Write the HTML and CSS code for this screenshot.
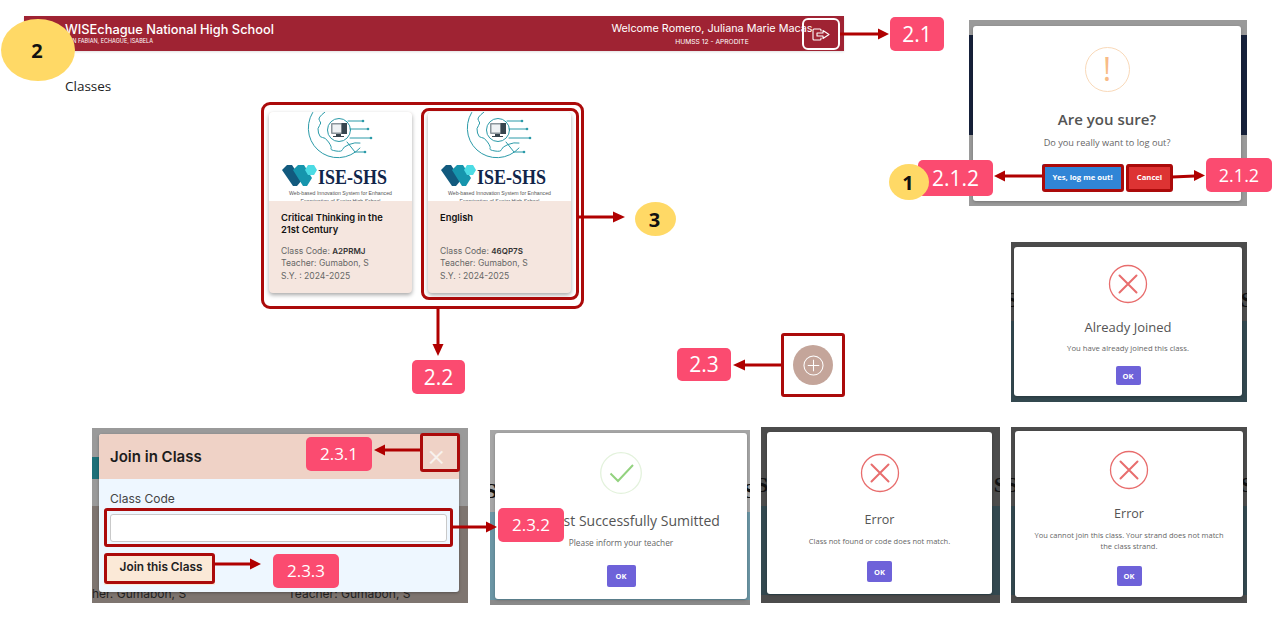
FILE: index.html
```html
<!DOCTYPE html>
<html lang="en">
<head>
<meta charset="utf-8">
<title>Classes</title>
<link rel="stylesheet" href="styles.css">
</head>
<body>
<svg class="defs" aria-hidden="true">
  <symbol id="logo" viewBox="0 0 143 89">
    <g fill="none" stroke="#2b9aa8" stroke-width="1" stroke-linecap="round" stroke-linejoin="round">
      <path d="M47 -4 A29 29 0 0 0 91 36"/>
      <path d="M56 0 Q48 6 50.500 8.500 Q53 11 50.500 13.500 Q48 16 49.500 21 Q51 26 53.500 25.500 Q56 25 59.500 30 Q63 35 62 36.500 Q61 38 67 39 Q73 40 73.500 37.500 Q74 35 80 32.500 Q86 30 91 31"/>
      <circle cx="70" cy="18" r="11.500"/>
      <path d="M79 9H94M81 17H99M81 26H102M78 30L86 40H96"/>
    </g>
    <g fill="#2b9aa8"><circle cx="94" cy="9" r="1.300"/><circle cx="99" cy="17" r="1.300"/><circle cx="102" cy="26" r="1.300"/><circle cx="96" cy="40" r="1.300"/></g>
    <rect x="62" y="11" width="16" height="11" rx="1" fill="#8a959b"/>
    <rect x="63.500" y="12.500" width="9" height="8" fill="#eef2f4"/>
    <rect x="72.500" y="11" width="5.500" height="11" fill="#37464f"/>
    <path d="M67 22h5v2h3v1H64v-1h3z" fill="#37464f"/>
    <path d="M13 58 L18 53 H23 L33 68 L28 74 H24 Z" fill="#125a7e"/>
    <path d="M24 58 L29 53 H35 L43 66 L38 74 H34 Z" fill="#1695ad"/>
    <path d="M36 58 L39 53 H45 L48 58 L45 63 H39 Z" fill="#4cdbe4"/>
    <text class="logo-word" x="49" y="72" textLength="69" lengthAdjust="spacingAndGlyphs">ISE-SHS</text>
    <text class="logo-sub" x="71.500" y="83" text-anchor="middle" textLength="103" lengthAdjust="spacingAndGlyphs">Web-based Innovation System for Enhanced</text>
    <text class="logo-sub" x="71.500" y="91" text-anchor="middle" textLength="80" lengthAdjust="spacingAndGlyphs">Examination of Senior High School</text>
  </symbol>
  <symbol id="x-icon" viewBox="0 0 40 40">
    <circle cx="20" cy="20" r="18.500" fill="none" stroke="#e86d6d" stroke-width="1.300"/>
    <path d="M11.500 11.500L28.500 28.500M28.500 11.500L11.500 28.500" stroke="#e86d6d" stroke-width="2" stroke-linecap="round"/>
  </symbol>
</svg>

<main class="canvas">
  <header class="topbar">
    <div class="school">
      <div class="school-name">WISEchague National High School</div>
      <div class="school-place">SAN FABIAN, ECHAGUE, ISABELA</div>
    </div>
    <div class="student">
      <div class="student-name">Welcome Romero, Juliana Marie Macas</div>
      <div class="student-class">HUMSS 12 - APRODITE</div>
    </div>
    <div class="logout-box">
      <svg class="logout-icon" viewBox="0 0 18 13" fill="none" stroke="#fff" stroke-width="1.100" stroke-linecap="round" stroke-linejoin="round">
        <path d="M9 3V2A1 1 0 0 0 8 1H2A1 1 0 0 0 1 2V11A1 1 0 0 0 2 12H8A1 1 0 0 0 9 11V10"/>
        <path d="M5 5H11V2.500L17 6.500L11 10.500V8H5Z"/>
      </svg>
    </div>
  </header>
  <div class="page-title">Classes</div>

  <section class="cards">
    <article class="card">
      <div class="card-img"><svg class="logo"><use href="#logo"/></svg></div>
      <div class="card-body">
        <h3 class="card-title">Critical Thinking in the 21st Century</h3>
        <p class="card-meta">Class Code: <b>A2PRMJ</b><br>Teacher: Gumabon, S<br>S.Y. : 2024-2025</p>
      </div>
    </article>
    <article class="card">
      <div class="card-img"><svg class="logo"><use href="#logo"/></svg></div>
      <div class="card-body">
        <h3 class="card-title">English</h3>
        <p class="card-meta">Class Code: <b>46QP7S</b><br>Teacher: Gumabon, S<br>S.Y. : 2024-2025</p>
      </div>
    </article>
  </section>

  <div class="fab"><svg class="fab-icon" viewBox="0 0 22 22" fill="none" stroke="#fff" stroke-width="1.100"><circle cx="11" cy="11" r="10"/><path d="M11 5V17M5 11H17"/></svg></div>

  <div class="frame frame-logout">
    <div class="dialog dialog-logout">
      <div class="warn-icon">!</div>
      <h2 class="d-title d-title-sure">Are you sure?</h2>
      <p class="d-text d-text-sure">Do you really want to log out?</p>
      <div class="d-actions">
        <button class="btn btn-yes">Yes, log me out!</button>
        <button class="btn btn-cancel">Cancel</button>
      </div>
    </div>
  </div>

  <div class="frame frame-dark frame-joined">
    <span class="ghost ghost-l">S</span><span class="ghost ghost-r">S</span>
    <div class="dialog dialog-joined">
      <svg class="x-icon"><use href="#x-icon"/></svg>
      <h2 class="d-title d-title-joined">Already Joined</h2>
      <p class="d-text">You have already joined this class.</p>
      <button class="btn-ok ok-joined">OK</button>
    </div>
  </div>

  <div class="frame frame-join">
    <span class="join-teal"></span>
    <span class="ghost-text ghost-text-a">her. Gumabon, S</span>
    <span class="ghost-text ghost-text-b">Teacher: Gumabon, S</span>
    <div class="join-dialog">
      <div class="join-head">
        <h2 class="join-title">Join in Class</h2>
        <span class="join-x">×</span>
      </div>
      <div class="join-body">
        <label class="join-label" for="code">Class Code</label>
        <input class="join-input" id="code" type="text">
        <button class="join-btn">Join this Class</button>
      </div>
    </div>
  </div>

  <div class="frame frame-success">
    <span class="ghost ghost-l ghost-low">S</span><span class="ghost ghost-r ghost-low">S</span>
    <div class="dialog dialog-success">
      <svg class="check-icon" viewBox="0 0 42 42" fill="none"><circle cx="21" cy="21" r="20.300" stroke="#e3f2dc" stroke-width="1.300"/><path d="M10.500 21.500L18 29L33 13" stroke="#93d27f" stroke-width="2"/></svg>
      <h2 class="d-title d-title-success">Request Successfully Sumitted</h2>
      <p class="d-text d-text-success">Please inform your teacher</p>
      <button class="btn-ok ok-success">OK</button>
    </div>
  </div>

  <div class="frame frame-dark frame-err1">
    <span class="ghost ghost-l">S</span><span class="ghost ghost-r">S</span>
    <div class="dialog dialog-err1">
      <svg class="x-icon"><use href="#x-icon"/></svg>
      <h2 class="d-title d-title-error">Error</h2>
      <p class="d-text d-text-error">Class not found or code does not match.</p>
      <button class="btn-ok ok-err1">OK</button>
    </div>
  </div>

  <div class="frame frame-dark frame-err2">
    <span class="ghost ghost-l">S</span><span class="ghost ghost-r">S</span>
    <div class="dialog dialog-err2">
      <svg class="x-icon"><use href="#x-icon"/></svg>
      <h2 class="d-title d-title-error d-title-error2">Error</h2>
      <p class="d-text d-text-error d-text-wrap">You cannot join this class. Your strand does not match the class strand.</p>
      <button class="btn-ok ok-err2">OK</button>
    </div>
  </div>

  <div class="hl hl-outer"></div>
  <div class="hl hl-inner"></div>
  <div class="hl hl-fab"></div>
  <div class="hl hl-x"></div>
  <div class="hl hl-input"></div>
  <div class="hl hl-join"></div>
  <div class="hl hl-yes"></div>
  <div class="hl hl-cancel"></div>

  <svg class="arrows" viewBox="0 0 1280 644" fill="none" stroke="#b00000" stroke-width="3">
    <path d="M840 34H878"/><path class="head" d="M878 28.500L889 34L878 39.500Z"/>
    <path d="M1042 176H1005"/><path class="head" d="M1005 170.500L994 176L1005 181.500Z"/>
    <path d="M1172 177L1195 176"/><path class="head" d="M1194 170L1205 175.500L1194 181Z"/>
    <path d="M578 217H614"/><path class="head" d="M613 211.500L625 217L613 222.500Z"/>
    <path d="M438 308V345"/><path class="head" d="M432.500 344L438 356L443.500 344Z"/>
    <path d="M781 365H745"/><path class="head" d="M745 359.500L733 365L745 370.500Z"/>
    <path d="M420 450H385"/><path class="head" d="M385 444.500L374 450L385 455.500Z"/>
    <path d="M452 527H487"/><path class="head" d="M486 521.500L497 527L486 532.500Z"/>
    <path d="M215 564H250"/><path class="head" d="M250 558.500L261 564L250 569.500Z"/>
  </svg>

  <div class="tag tag-21">2.1</div>
  <div class="tag tag-212a">2.1.2</div>
  <div class="tag tag-212b">2.1.2</div>
  <div class="tag tag-22">2.2</div>
  <div class="tag tag-23">2.3</div>
  <div class="tag tag-231">2.3.1</div>
  <div class="tag tag-232">2.3.2</div>
  <div class="tag tag-233">2.3.3</div>

  <div class="step step-2">2</div>
  <div class="step step-1">1</div>
  <div class="step step-3">3</div>
</main>
</body>
</html>
```

FILE: styles.css
```css
* { box-sizing: border-box; }
html, body { margin: 0; padding: 0; background: #fff; }
body { font-family: "Open Sans", "Liberation Sans", sans-serif; }
h2, h3, p { margin: 0; }
button { font: inherit; border: 0; padding: 0; }
.defs { position: absolute; width: 0; height: 0; }

.canvas { position: relative; width: 1280px; height: 644px; overflow: hidden; background: #fff; }

/* top bar */
.topbar {
  position: absolute; left: 24px; top: 16px; width: 820px; height: 35px;
  background: #9f2333; color: #fff; display: flex; align-items: center;
  font-family: Inter, "Open Sans", sans-serif; box-shadow: 0 1px 2px rgba(0,0,0,.12);
}
.school { margin-left: 41px; flex: 1; }
.school-name { font-size: 12.800px; font-weight: 500; line-height: 15px; }
.school-place { font-size: 5.500px; line-height: 7px; margin-top: 1px; }
.student { text-align: center; width: 202px; margin-right: 31px; }
.student-name { font-size: 10.800px; line-height: 14px; white-space: nowrap; }
.student-class { font-size: 6.700px; line-height: 8px; margin-top: 2px; }
.logout-box {
  position: absolute; left: 778px; top: 2px; width: 38px; height: 32px;
  border: 2px solid #fff; border-radius: 6px; display: flex; align-items: center; justify-content: center;
}
.logout-icon { width: 18px; height: 13px; }

.page-title { position: absolute; left: 65px; top: 77px; font-size: 13.500px; line-height: 18px; color: #222; }

/* cards */
.cards { position: absolute; left: 269px; top: 112px; display: flex; gap: 16px; font-family: Inter, "Open Sans", sans-serif; }
.card { width: 143px; height: 181px; border-radius: 4px; overflow: hidden; background: #f5e6df; box-shadow: 0 2px 4px rgba(0,0,0,.35); }
.card-img { height: 89px; background: #fff; overflow: hidden; }
.logo { display: block; width: 143px; height: 89px; }
.logo-word { font-family: "Liberation Serif", serif; font-size: 21px; font-weight: 700; fill: #10254a; }
.logo-sub { font-family: "Liberation Sans", sans-serif; font-size: 5px; fill: #555; }
.card-body { padding: 11px 12px 0; }
.card-title { font-size: 9.400px; font-weight: 600; line-height: 11.500px; height: 23px; color: #111; }
.card-meta { margin-top: 10px; font-size: 8.600px; line-height: 12.300px; color: #666; white-space: nowrap; }
.card-meta b { color: #333; font-size: 8px; font-weight: 600; }

/* floating button */
.fab { position: absolute; left: 793px; top: 345px; width: 40px; height: 40px; border-radius: 50%; background: #c4a59a; display: flex; align-items: center; justify-content: center; }
.fab-icon { width: 21px; height: 21px; }

/* framed dialogs */
.frame { position: absolute; overflow: hidden; }
.frame-logout { left: 969px; top: 20px; width: 278px; height: 186px; background: linear-gradient(#9a9a9a 15px, #16213a 15px, #16213a 115px, #9a9a9a 115px); }
.frame-dark { background: linear-gradient(#4c4c4c 79px, #33484f 79px, #33484f 168px, #4c4c4c 168px); }
.frame-joined { left: 1011px; top: 242px; width: 236px; height: 160px; }
.frame-err1 { left: 761px; top: 427px; width: 239px; height: 176px; }
.frame-err2 { left: 1011px; top: 427px; width: 236px; height: 176px; }
.frame-success { left: 490px; top: 430px; width: 260px; height: 175px; background: linear-gradient(#a6a6a6 82px, #6b96a5 82px, #6b96a5 170px, #8a8a8a 170px); }
.frame-join { left: 92px; top: 428px; width: 376px; height: 175px; background: linear-gradient(#9a9a9a 78px, #7e7570 78px); }
.join-teal { position: absolute; left: 0; top: 29px; width: 8px; height: 22px; background: #1d7078; }

.ghost { position: absolute; top: 45px; font-family: "Liberation Serif", serif; font-weight: 700; font-size: 22px; line-height: 26px; color: #111; }
.ghost-l { left: -5px; }
.ghost-r { right: -6px; }
.ghost-low { top: 48px; }
.ghost-text { position: absolute; top: 158px; font-family: Inter, sans-serif; font-size: 12px; line-height: 16px; color: #222; white-space: nowrap; }
.ghost-text-a { left: 0; }
.ghost-text-b { left: 196px; }

.dialog { position: absolute; background: #fff; border-radius: 3px; display: flex; flex-direction: column; align-items: center; color: #545454; box-shadow: 0 1px 3px rgba(0,0,0,.25); }
.dialog-logout { left: 4px; top: 6px; width: 268px; height: 175px; padding-top: 21px; }
.dialog-joined { left: 3px; top: 5px; width: 228px; height: 149px; padding-top: 17px; }
.dialog-success { left: 5px; top: 3px; width: 252px; height: 166px; padding-top: 19px; }
.dialog-err1 { left: 6px; top: 5px; width: 225px; height: 162px; padding-top: 21px; }
.dialog-err2 { left: 4px; top: 4px; width: 228px; height: 166px; padding-top: 19px; }

.warn-icon { width: 45px; height: 45px; border: 1.500px solid #f9d9b9; border-radius: 50%; color: #f8bb86; font-size: 32px; line-height: 41px; text-align: center; font-weight: 400; }
.check-icon { width: 42px; height: 42px; display: block; }
.x-icon { width: 40px; height: 40px; display: block; }

.d-title { font-weight: 600; line-height: 20px; white-space: nowrap; }
.d-title-sure { font-size: 15px; margin-top: 17px; }
.d-title-joined { font-size: 13px; font-weight: 500; margin-top: 13px; }
.d-title-success { font-size: 14px; font-weight: 500; margin-top: 17px; }
.d-title-error { font-size: 12.500px; font-weight: 500; margin-top: 17px; }
.d-title-error2 { margin-top: 14px; }
.d-text { font-size: 7.700px; line-height: 11px; margin-top: 6px; color: #666; text-align: center; }
.d-text-sure { font-size: 9.200px; line-height: 14px; margin-top: 7px; }
.d-text-success { font-size: 8.300px; line-height: 13px; margin-top: 5px; }
.d-text-error { font-size: 7.500px; }
.d-text-wrap { width: 200px; }

.d-actions { display: flex; gap: 4px; margin-top: 14px; }
.btn { height: 26px; color: #fff; font-size: 7.700px; font-weight: 700; border-radius: 2px; }
.btn-yes { width: 81px; background: #3085d6; }
.btn-cancel { width: 45px; background: #d33; }

.btn-ok { background: #6e62d9; color: #fff; font-size: 7.500px; font-weight: 700; border-radius: 2px; }
.ok-joined { width: 25px; height: 19px; margin-top: 12px; }
.ok-success { width: 29px; height: 22px; margin-top: 16px; }
.ok-err1 { width: 25px; height: 21px; margin-top: 14px; }
.ok-err2 { width: 25px; height: 20px; margin-top: 14px; }

/* join dialog */
.join-dialog { position: absolute; left: 7px; top: 6px; width: 360px; height: 158px; border-radius: 3px; overflow: hidden; background: #eef7ff; font-family: Inter, "Open Sans", sans-serif; box-shadow: 0 1px 3px rgba(0,0,0,.3); }
.join-head { height: 45px; background: #efd2c6; display: flex; align-items: center; justify-content: space-between; padding: 0 11px; }
.join-title { font-size: 15px; font-weight: 600; color: #1c1c1c; }
.join-x { font-size: 30px; line-height: 30px; color: #f8f2ee; font-weight: 300; margin: -4px 2px 0 0; }
.join-body { display: flex; flex-direction: column; align-items: flex-start; padding: 12px 11px 0; }
.join-label { font-size: 12px; line-height: 16px; color: #444; }
.join-input { display: block; width: 337px; height: 28px; margin-top: 7px; background: #fff; border: 1px solid #c9c9c9; border-radius: 3px; padding: 0; }
.join-btn { margin: 13px 0 0 -6px; width: 111px; height: 30px; padding: 0 0 6px 3px; background: #fbe9d7; color: #222; font-size: 11.800px; font-weight: 600; }

/* annotations */
.hl { position: absolute; border: 3px solid #ab0a0a; border-radius: 3px; }
.hl-outer { left: 261px; top: 102px; width: 323px; height: 207px; border-radius: 9px; }
.hl-inner { left: 421px; top: 108px; width: 158px; height: 192px; border-radius: 8px; }
.hl-fab { left: 781px; top: 333px; width: 64px; height: 64px; }
.hl-x { left: 420px; top: 433px; width: 40px; height: 39px; }
.hl-input { left: 104px; top: 508px; width: 349px; height: 39px; }
.hl-join { left: 104px; top: 553px; width: 111px; height: 31px; }
.hl-yes { left: 1042px; top: 164px; width: 82px; height: 28px; }
.hl-cancel { left: 1126px; top: 164px; width: 47px; height: 28px; }

.arrows { position: absolute; left: 0; top: 0; width: 1280px; height: 644px; pointer-events: none; }
.head { fill: #b00000; stroke: none; }

.tag { position: absolute; background: #fb4b70; color: #fff; border-radius: 5px; font-size: 21px; line-height: 34px; text-align: center; height: 34px; }
.tag-21 { left: 890px; top: 17px; width: 54px; }
.tag-212a { left: 918px; top: 160px; width: 75px; height: 36px; line-height: 36px; }
.tag-212b { left: 1206px; top: 158px; width: 66px; font-size: 18px; }
.tag-22 { left: 412px; top: 360px; width: 53px; }
.tag-23 { left: 677px; top: 348px; width: 54px; height: 33px; line-height: 33px; }
.tag-231 { left: 306px; top: 437px; width: 66px; font-size: 17px; }
.tag-232 { left: 498px; top: 508px; width: 66px; font-size: 17px; }
.tag-233 { left: 273px; top: 554px; width: 66px; font-size: 17px; }

.step { position: absolute; background: #ffd966; border-radius: 50%; color: #111; font-weight: 700; font-size: 20px; display: flex; align-items: center; justify-content: center; padding-right: 2px; }
.step-2 { left: 1px; top: 19px; width: 74px; height: 62px; }
.step-1 { left: 889px; top: 164px; width: 40px; height: 36px; }
.step-3 { left: 635px; top: 202px; width: 41px; height: 34px; }
```
